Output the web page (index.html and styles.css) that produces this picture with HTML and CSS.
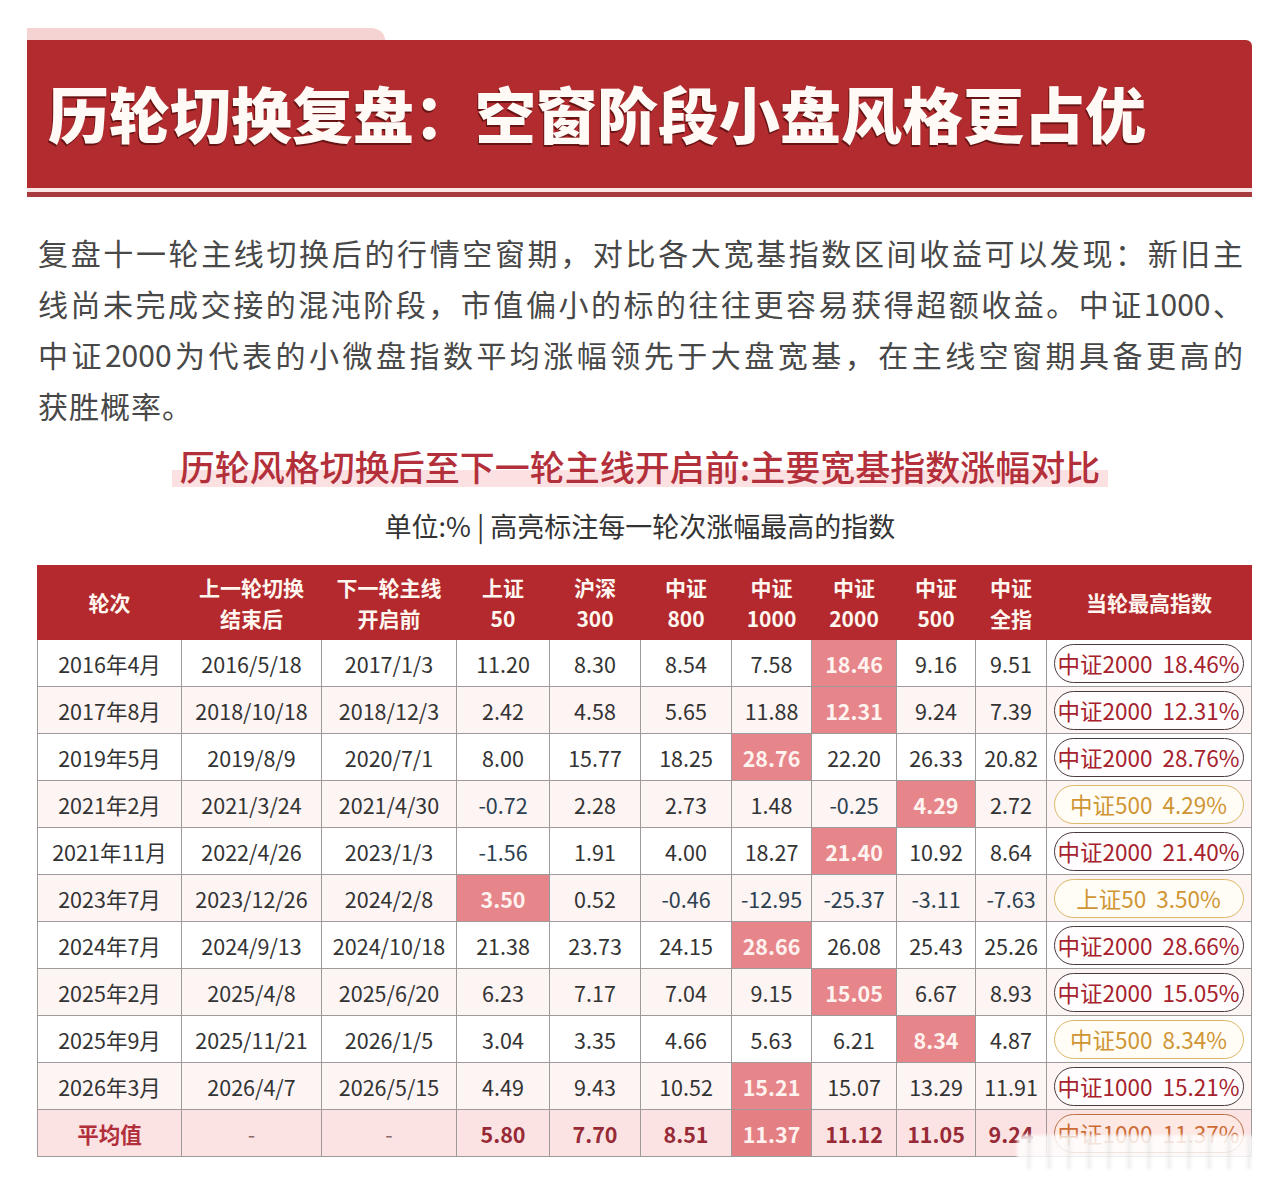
FILE: index.html
```html
<!DOCTYPE html>
<html lang="zh-CN">
<head>
<meta charset="utf-8">
<title>历轮切换复盘</title>
<link rel="stylesheet" href="styles.css">
</head>
<body>
<div class="page">
  <header class="banner-wrap">
    <div class="tab"></div>
    <div class="banner">
      <h1 class="title">历轮切换复盘：空窗阶段小盘风格更占优</h1>
    </div>
    <div class="banner-rule"></div>
  </header>

  <div class="intro">
    <p class="line">复盘十一轮主线切换后的行情空窗期，对比各大宽基指数区间收益可以发现：新旧主</p>
    <p class="line">线尚未完成交接的混沌阶段，市值偏小的标的往往更容易获得超额收益。中证1000、</p>
    <p class="line">中证2000为代表的小微盘指数平均涨幅领先于大盘宽基，在主线空窗期具备更高的</p>
    <p class="line last">获胜概率。</p>
  </div>

  <h2 class="subtitle"><span class="hl">历轮风格切换后至下一轮主线开启前:主要宽基指数涨幅对比</span></h2>
  <div class="unit">单位:% | 高亮标注每一轮次涨幅最高的指数</div>

  <div class="table-wrap">
  <table class="data">
    <colgroup>
      <col class="c1"><col class="c2"><col class="c3"><col class="c4"><col class="c5"><col class="c6"><col class="c7"><col class="c8"><col class="c9"><col class="c10"><col class="c11">
    </colgroup>
    <thead>
      <tr>
        <th>轮次</th>
        <th>上一轮切换<br>结束后</th>
        <th>下一轮主线<br>开启前</th>
        <th>上证<br>50</th>
        <th>沪深<br>300</th>
        <th>中证<br>800</th>
        <th>中证<br>1000</th>
        <th>中证<br>2000</th>
        <th>中证<br>500</th>
        <th>中证<br>全指</th>
        <th>当轮最高指数</th>
      </tr>
    </thead>
    <tbody>
      <tr>
        <td>2016年4月</td><td>2016/5/18</td><td>2017/1/3</td><td>11.20</td><td>8.30</td><td>8.54</td><td>7.58</td><td class="top">18.46</td><td>9.16</td><td>9.51</td>
        <td class="best"><span class="pill dark"><span>中证2000</span><span>18.46%</span></span></td>
      </tr>
      <tr>
        <td>2017年8月</td><td>2018/10/18</td><td>2018/12/3</td><td>2.42</td><td>4.58</td><td>5.65</td><td>11.88</td><td class="top">12.31</td><td>9.24</td><td>7.39</td>
        <td class="best"><span class="pill dark"><span>中证2000</span><span>12.31%</span></span></td>
      </tr>
      <tr>
        <td>2019年5月</td><td>2019/8/9</td><td>2020/7/1</td><td>8.00</td><td>15.77</td><td>18.25</td><td class="top">28.76</td><td>22.20</td><td>26.33</td><td>20.82</td>
        <td class="best"><span class="pill dark"><span>中证2000</span><span>28.76%</span></span></td>
      </tr>
      <tr>
        <td>2021年2月</td><td>2021/3/24</td><td>2021/4/30</td><td class="neg">-0.72</td><td>2.28</td><td>2.73</td><td>1.48</td><td class="neg">-0.25</td><td class="top">4.29</td><td>2.72</td>
        <td class="best"><span class="pill gold"><span>中证500</span><span>4.29%</span></span></td>
      </tr>
      <tr>
        <td>2021年11月</td><td>2022/4/26</td><td>2023/1/3</td><td class="neg">-1.56</td><td>1.91</td><td>4.00</td><td>18.27</td><td class="top">21.40</td><td>10.92</td><td>8.64</td>
        <td class="best"><span class="pill dark"><span>中证2000</span><span>21.40%</span></span></td>
      </tr>
      <tr>
        <td>2023年7月</td><td>2023/12/26</td><td>2024/2/8</td><td class="top">3.50</td><td>0.52</td><td class="neg">-0.46</td><td class="neg">-12.95</td><td class="neg">-25.37</td><td class="neg">-3.11</td><td class="neg">-7.63</td>
        <td class="best"><span class="pill gold"><span>上证50</span><span>3.50%</span></span></td>
      </tr>
      <tr>
        <td>2024年7月</td><td>2024/9/13</td><td>2024/10/18</td><td>21.38</td><td>23.73</td><td>24.15</td><td class="top">28.66</td><td>26.08</td><td>25.43</td><td>25.26</td>
        <td class="best"><span class="pill dark"><span>中证2000</span><span>28.66%</span></span></td>
      </tr>
      <tr>
        <td>2025年2月</td><td>2025/4/8</td><td>2025/6/20</td><td>6.23</td><td>7.17</td><td>7.04</td><td>9.15</td><td class="top">15.05</td><td>6.67</td><td>8.93</td>
        <td class="best"><span class="pill dark"><span>中证2000</span><span>15.05%</span></span></td>
      </tr>
      <tr>
        <td>2025年9月</td><td>2025/11/21</td><td>2026/1/5</td><td>3.04</td><td>3.35</td><td>4.66</td><td>5.63</td><td>6.21</td><td class="top">8.34</td><td>4.87</td>
        <td class="best"><span class="pill gold"><span>中证500</span><span>8.34%</span></span></td>
      </tr>
      <tr>
        <td>2026年3月</td><td>2026/4/7</td><td>2026/5/15</td><td>4.49</td><td>9.43</td><td>10.52</td><td class="top">15.21</td><td>15.07</td><td>13.29</td><td>11.91</td>
        <td class="best"><span class="pill dark"><span>中证1000</span><span>15.21%</span></span></td>
      </tr>
      <tr class="avg">
        <td class="avg-label">平均值</td><td class="dash">-</td><td class="dash">-</td><td>5.80</td><td>7.70</td><td>8.51</td><td class="top">11.37</td><td>11.12</td><td>11.05</td><td>9.24</td>
        <td class="best"><span class="pill orange"><span>中证1000</span><span>11.37%</span></span></td>
      </tr>
    </tbody>
  </table>
  <div class="watermark"></div>
  </div>
</div>
</body>
</html>
```

FILE: styles.css
```css
* { box-sizing: border-box; }
html, body { margin: 0; padding: 0; background: #ffffff; }
body {
  font-family: "Noto Sans CJK SC", "Noto Sans", sans-serif;
  color: #333;
  overflow: hidden;
}
.page { width: 1280px; height: 1187px; }

/* banner */
.banner-wrap { margin: 28px 0 0 27px; width: 1225px; }
.tab {
  width: 358px; height: 12px;
  background: #f6d3d3;
  border-top-right-radius: 14px 12px;
}
.banner {
  height: 148px;
  background: #b22c2f;
  border-top-right-radius: 6px;
  display: flex; align-items: center;
  padding-left: 21px;
}
.title {
  margin: 0;
  font-size: 61px;
  font-weight: 900;
  color: #fffaf6;
  letter-spacing: 0;
  line-height: 1;
  text-shadow: -1px 2px 0 rgba(90, 15, 15, 0.85);
  padding-bottom: 4px;
}
.banner-rule {
  height: 9px;
  background: linear-gradient(#f9e6e6 0 4px, #a73a3c 4px 9px);
}

/* intro */
.intro { margin: 30px 37px 0 38px; }
.line {
  margin: 0;
  font-size: 30px;
  line-height: 51px;
  color: #484848;
  text-align: justify;
  text-align-last: justify;
  white-space: nowrap;
}
.line.last { text-align-last: left; letter-spacing: 1px; }

/* subtitle */
.subtitle {
  margin: 12px 0 0;
  text-align: center;
  font-size: 35px;
  font-weight: 500;
  line-height: 46px;
  color: #b3303b;
}
.hl {
  padding: 0 8px;
  background: linear-gradient(to bottom, transparent 0 58%, #fbe1e1 58% 92%, transparent 92%);
}
.unit {
  margin-top: 19px;
  text-align: center;
  font-size: 27px;
  line-height: 36px;
  color: #333;
}

/* table */
.table-wrap { position: relative; margin: 21px 0 0 37px; width: 1214px; }
.data {
  border-collapse: collapse;
  table-layout: fixed;
  width: 1214px;
}
.c1 { width: 144px; } .c2 { width: 140px; } .c3 { width: 135px; }
.c4 { width: 93px; } .c5 { width: 91px; } .c6 { width: 91px; }
.c7 { width: 80px; } .c8 { width: 85px; } .c9 { width: 79px; }
.c10 { width: 71px; } .c11 { width: 205px; }

.data th {
  background: #b3292d;
  color: #fff6f0;
  font-size: 21px;
  font-weight: 700;
  line-height: 31px;
  height: 74px;
  padding: 0;
  border: 1px solid #b3292d;
  text-align: center;
  vertical-align: middle;
}
.data td {
  height: 47px;
  padding: 0;
  border: 1px solid #9f9a9a;
  text-align: center;
  vertical-align: middle;
  font-size: 21.5px;
  color: #333;
  background: #ffffff;
  white-space: nowrap;
}
.data tbody tr:nth-child(even) td { background: #fdf4f4; }
.data td.neg { color: #2c4150; }
.data tbody tr td.top {
  background: #e6858a;
  color: #fff3f0;
  font-weight: 700;
}
.data td.best { padding: 0 6px 0 5px; }

.pill {
  display: inline-flex; align-items: center; justify-content: center;
  gap: 10px;
  width: 190px; height: 39px;
  border-radius: 20px;
  font-size: 22.5px;
  background: #fffdfd;
}
.pill.dark { border: 1.5px solid #4b3a3c; color: #a6222d; }
.pill.gold { border: 1.5px solid #dcb768; color: #cf9535; background: #fffdf6; }
.pill.orange { border: 1.5px solid #b97048; color: #cc6c35; background: #fde8e4; }

.data tbody tr.avg td {
  background: #fce3e3;
  color: #972a36;
  font-weight: 700;
}
.data tbody tr.avg td.top { background: #e47f84; color: #fff3f0; }
.data tbody tr.avg td.avg-label { color: #b12f3b; }
.data tbody tr.avg td.dash { color: #8a6a6a; font-weight: 400; }
.data tbody tr.avg td.best { font-weight: 400; }

.watermark {
  position: absolute;
  left: 980px; bottom: -12px;
  width: 238px; height: 34px;
  border-radius: 6px;
  background:
    repeating-linear-gradient(90deg, rgba(200,200,200,0.0) 0 10px, rgba(215,215,215,0.4) 10px 14px, rgba(200,200,200,0.0) 14px 20px),
    rgba(255,255,255,0.82);
  filter: blur(1.5px);
}
```
